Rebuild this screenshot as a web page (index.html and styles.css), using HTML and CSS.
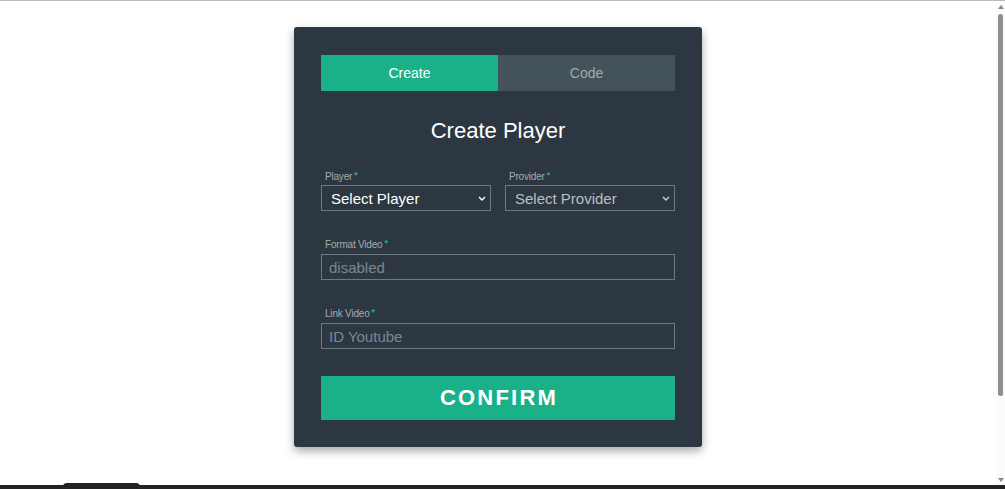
FILE: index.html
```html
<!DOCTYPE html>
<html lang="en">
<head>
<meta charset="utf-8">
<title>Create Player</title>
<link rel="stylesheet" href="styles.css">
</head>
<body>
<div class="topline"></div>
<div class="viewport">
  <main class="main">
    <section class="card">
      <div class="tabs">
        <button class="tab tab-active" type="button">Create</button>
        <button class="tab" type="button">Code</button>
      </div>
      <h1 class="title">Create Player</h1>
      <div class="row">
        <div class="field">
          <label class="label">Player<span class="req">*</span></label>
          <div class="select-wrap">
            <select class="select select-filled">
              <option>Select Player</option>
            </select>
            <svg class="chevron" width="8" height="5" viewBox="0 0 8 5"><path d="M1 1 L4 4 L7 1" fill="none" stroke="#ffffff" stroke-width="1.4"/></svg>
          </div>
        </div>
        <div class="field">
          <label class="label">Provider<span class="req">*</span></label>
          <div class="select-wrap">
            <select class="select select-empty">
              <option>Select Provider</option>
            </select>
            <svg class="chevron" width="8" height="5" viewBox="0 0 8 5"><path d="M1 1 L4 4 L7 1" fill="none" stroke="#c9d0d4" stroke-width="1.4"/></svg>
          </div>
        </div>
      </div>
      <div class="field field-block">
        <label class="label">Format Video<span class="req">*</span></label>
        <input class="input" type="text" placeholder="disabled" disabled>
      </div>
      <div class="field field-block">
        <label class="label">Link Video<span class="req">*</span></label>
        <input class="input" type="text" placeholder="ID Youtube">
      </div>
      <button class="confirm" type="button">CONFIRM</button>
    </section>
  </main>
  <div class="scrollbar">
    <span class="arrow arrow-up"></span>
    <span class="thumb"></span>
    <span class="arrow arrow-down"></span>
  </div>
</div>
<div class="taskbar"><span class="taskbar-tab"></span></div>
</body>
</html>
```

FILE: styles.css
```css
* { box-sizing: border-box; }

html, body {
  margin: 0;
  height: 100%;
}

body {
  display: flex;
  flex-direction: column;
  background: #ffffff;
  font-family: "Liberation Sans", Arial, sans-serif;
  overflow: hidden;
}

.topline {
  height: 1px;
  background: #b9b9b9;
  flex: none;
}

.viewport {
  flex: 1;
  display: flex;
  min-height: 0;
}

.main {
  flex: 1;
  display: flex;
  justify-content: center;
  align-items: flex-start;
  padding-top: 26px;
}

.card {
  width: 408px;
  background: #2c3742;
  border-radius: 3px;
  padding: 28px 27px 27px;
  box-shadow: 0 4px 10px rgba(0, 0, 0, 0.35);
}

.tabs {
  display: flex;
  height: 36px;
}

.tab {
  flex: 1;
  border: 0;
  margin: 0;
  padding: 0;
  font-family: inherit;
  font-size: 14px;
  background: #435359;
  color: #a0abaf;
}

.tab-active {
  background: #1ab188;
  color: #ffffff;
}

.title {
  margin: 27px 0 0;
  font-weight: normal;
  font-size: 22px;
  line-height: 26px;
  text-align: center;
  color: #ffffff;
}

.row {
  display: flex;
  gap: 14px;
  margin-top: 26px;
}

.field {
  flex: 1;
  display: flex;
  flex-direction: column;
}

.field-block {
  margin-top: 27px;
}

.label {
  font-size: 10px;
  line-height: 12px;
  letter-spacing: -0.2px;
  color: #a3abb1;
  padding-left: 4px;
  padding-top: 1px;
  margin-bottom: 2px;
}

.field-block .label {
  margin-bottom: 3px;
}

.req {
  color: #1ab188;
  font-size: 9px;
  font-weight: bold;
  vertical-align: top;
  margin-left: 2px;
  line-height: 9px;
}

.select-wrap {
  position: relative;
}

.select {
  appearance: none;
  -webkit-appearance: none;
  width: 100%;
  height: 26px;
  margin: 0;
  border: 1px solid #6b7a82;
  border-radius: 0;
  background: #2c3742;
  font-family: inherit;
  font-size: 15px;
  padding: 0 20px 0 9px;
  outline: none;
}

.select-filled { color: #ffffff; }
.select-empty { color: #b9c0c5; }

.chevron {
  position: absolute;
  right: 5px;
  top: 11px;
  pointer-events: none;
}

.input {
  width: 100%;
  height: 26px;
  margin: 0;
  border: 1px solid #6b7a82;
  border-radius: 0;
  background: #2c3742;
  font-family: inherit;
  font-size: 15px;
  padding: 0 7px;
  color: #ffffff;
  outline: none;
}

.input::placeholder {
  color: #7c878f;
  opacity: 1;
}

.confirm {
  display: block;
  width: 100%;
  height: 44px;
  margin-top: 27px;
  border: 0;
  padding: 0 0 0 2px;
  background: #1ab188;
  color: #ffffff;
  font-family: inherit;
  font-weight: bold;
  font-size: 22px;
  letter-spacing: 2.2px;
}

.scrollbar {
  width: 9px;
  flex: none;
  background: #fbfbfb;
  display: flex;
  flex-direction: column;
  align-items: center;
  padding: 4px 0 3px;
}

.thumb {
  flex: 1;
  width: 5px;
  margin: 5px 0 82px;
  border-radius: 3px;
  background: #8e8e8e;
}

.arrow {
  width: 0;
  height: 0;
  border-left: 3px solid transparent;
  border-right: 3px solid transparent;
}

.arrow-up { border-bottom: 4px solid #8a8a8a; }
.arrow-down { border-top: 4px solid #8a8a8a; }

.taskbar {
  position: relative;
  height: 4px;
  flex: none;
  background: #222222;
}

.taskbar-tab {
  position: absolute;
  left: 63px;
  top: -2px;
  width: 77px;
  height: 4px;
  border-radius: 4px 4px 0 0;
  background: #222222;
}
```
